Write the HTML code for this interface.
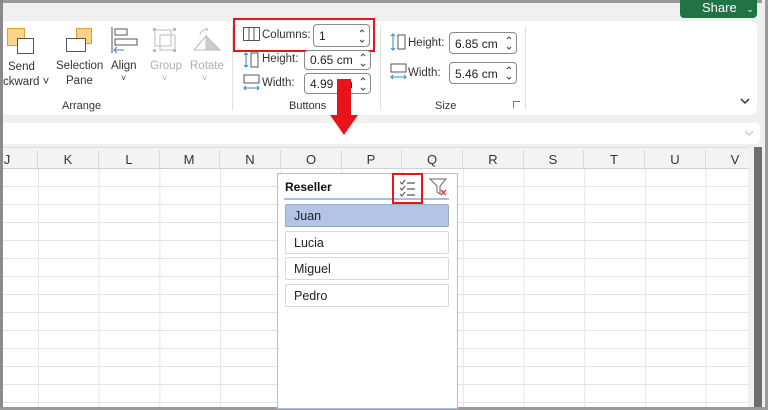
<!DOCTYPE html><html><head><style>
*{box-sizing:border-box;margin:0;padding:0}
body{width:768px;height:410px;overflow:hidden;background:#f0f0f0;font-family:"Liberation Sans",sans-serif;position:relative;color:#222}
.a{position:absolute}
.t{font-size:11.5px;color:#333;white-space:nowrap}
.g{color:#b0b0b0}
.inp{position:absolute;background:#fff;border:1px solid #8a8a8a;border-radius:4px;font-size:12px;padding:2px 0 0 5px;color:#222}
.inp svg{position:absolute;right:4px;top:50%;margin-top:-8px}
.col{position:absolute;top:150px;height:19px;width:61px;text-align:center;font-size:13px;color:#333;line-height:19px;border-right:1px solid #d8d8d8}
.item{position:absolute;left:285px;width:164px;height:23px;border:1px solid #d8d8d8;border-radius:2px;background:#fff;font-size:12.5px;padding:4px 0 0 8px;color:#222}
</style></head><body>
<div class="a" style="left:0;top:0;width:768px;height:3px;background:#9a9a9a"></div>
<div class="a" style="left:0;top:0;width:3px;height:410px;background:#8a8a8a"></div>
<div class="a" style="left:680px;top:0;width:77px;height:18px;background:#217346;border-radius:0 0 4px 4px;color:#fff;font-size:13px;padding:0 0 0 22px;line-height:15px">Share <span style="font-size:9px;margin-left:6px">⌄</span></div>
<div class="a" style="left:3px;top:21px;width:754px;height:94px;background:#fff;border-radius:0 6px 6px 0"></div>
<div class="a" style="left:7px;top:28px;width:18px;height:18px;background:#fbd38a;border:1px solid #e0a030"></div>
<div class="a" style="left:17px;top:38px;width:17px;height:16px;background:#fff;border:1.5px solid #555"></div>
<div class="a t" style="left:8px;top:61px">Send</div>
<div class="a t" style="left:3px;top:76px">ckward ˅</div>
<div class="a" style="left:76px;top:28px;width:16px;height:16px;background:#fbd38a;border:1px solid #e0a030"></div>
<div class="a" style="left:66px;top:38px;width:20px;height:14px;background:#fff;border:1.5px solid #555"></div>
<div class="a t" style="left:56px;top:60px">Selection</div>
<div class="a t" style="left:66px;top:75px">Pane</div>
<svg class="a" style="left:110px;top:26px" width="30" height="30"><path d="M2 1v26" stroke="#555"/><rect x="5" y="3" width="12" height="6" fill="none" stroke="#555"/><rect x="5" y="13" width="22" height="6" fill="none" stroke="#555"/><path d="M4 24h10M7 21l-3 3 3 3" stroke="#2a8ad4" fill="none"/></svg>
<div class="a t" style="left:111px;top:60px">Align</div>
<div class="a t" style="left:121px;top:73px;font-size:9px">˅</div>
<svg class="a" style="left:152px;top:27px" width="26" height="28"><rect x="3" y="3" width="16" height="16" fill="none" stroke="#bbb"/><rect x="8" y="8" width="15" height="15" fill="none" stroke="#bbb"/><rect x="1" y="1" width="3" height="3" fill="#bbb"/><rect x="21" y="1" width="3" height="3" fill="#bbb"/><rect x="1" y="22" width="3" height="3" fill="#bbb"/><rect x="21" y="22" width="3" height="3" fill="#bbb"/></svg>
<div class="a t g" style="left:150px;top:60px">Group</div>
<div class="a t g" style="left:162px;top:73px;font-size:9px">˅</div>
<svg class="a" style="left:192px;top:27px" width="30" height="28"><path d="M2 23L14 9v14z" fill="none" stroke="#bbb"/><path d="M14 9l14 14H14" fill="#ccc" stroke="#bbb"/><path d="M8 8a6 6 0 0 1 8-5l-2-2" fill="none" stroke="#bbb"/></svg>
<div class="a t g" style="left:190px;top:60px">Rotate</div>
<div class="a t g" style="left:202px;top:73px;font-size:9px">˅</div>
<div class="a t" style="left:62px;top:100px;font-size:11px">Arrange</div>
<div class="a" style="left:232px;top:26px;width:1px;height:84px;background:#e0e0e0"></div>
<svg class="a" style="left:243px;top:27px" width="17" height="14"><rect x="0.5" y="0.5" width="16" height="13" fill="none" stroke="#555"/><path d="M6 0v14M11 0v14" stroke="#555"/></svg>
<div class="a t" style="left:262px;top:29px">Columns:</div>
<div class="inp" style="left:313px;top:24px;width:57px;height:23px;padding-top:4px">1<svg width="6" height="16"><path d="M1 4l2-2 2 2M1 12l2 2 2-2" stroke="#444" fill="none"/></svg></div>
<div class="a" style="left:233px;top:18px;width:142px;height:34px;border:2.5px solid #e8141a"></div>
<svg class="a" style="left:243px;top:52px" width="17" height="16"><path d="M3 1v14M1 3l2-2 2 2M1 13l2 2 2-2" stroke="#2a8ad4" fill="none"/><rect x="8" y="1" width="7" height="14" fill="none" stroke="#555"/></svg>
<div class="a t" style="left:262px;top:53px">Height:</div>
<div class="inp" style="left:304px;top:50px;width:67px;height:20px">0.65 cm<svg width="6" height="16"><path d="M1 4l2-2 2 2M1 12l2 2 2-2" stroke="#444" fill="none"/></svg></div>
<svg class="a" style="left:243px;top:74px" width="17" height="18"><rect x="1" y="1" width="15" height="8" fill="none" stroke="#555"/><path d="M1 14h15M3 12l-2 2 2 2M14 12l2 2-2 2" stroke="#2a8ad4" fill="none"/></svg>
<div class="a t" style="left:262px;top:77px">Width:</div>
<div class="inp" style="left:304px;top:73px;width:67px;height:21px;padding-top:3px">4.99 cm<svg width="6" height="16"><path d="M1 4l2-2 2 2M1 12l2 2 2-2" stroke="#444" fill="none"/></svg></div>
<div class="a t" style="left:289px;top:100px;font-size:11px">Buttons</div>
<div class="a" style="left:380px;top:26px;width:1px;height:84px;background:#e0e0e0"></div>
<svg class="a" style="left:390px;top:33px" width="17" height="18"><path d="M3 1v16M1 3l2-2 2 2M1 15l2 2 2-2" stroke="#2a8ad4" fill="none"/><rect x="8" y="2" width="7" height="14" fill="none" stroke="#555"/></svg>
<div class="a t" style="left:408px;top:37px">Height:</div>
<div class="inp" style="left:449px;top:32px;width:68px;height:22px;padding-top:4px">6.85 cm<svg width="6" height="16"><path d="M1 4l2-2 2 2M1 12l2 2 2-2" stroke="#444" fill="none"/></svg></div>
<svg class="a" style="left:390px;top:63px" width="17" height="18"><rect x="1" y="1" width="15" height="8" fill="none" stroke="#555"/><path d="M1 14h15M3 12l-2 2 2 2M14 12l2 2-2 2" stroke="#2a8ad4" fill="none"/></svg>
<div class="a t" style="left:408px;top:67px">Width:</div>
<div class="inp" style="left:449px;top:62px;width:68px;height:22px;padding-top:4px">5.46 cm<svg width="6" height="16"><path d="M1 4l2-2 2 2M1 12l2 2 2-2" stroke="#444" fill="none"/></svg></div>
<div class="a t" style="left:435px;top:100px;font-size:11px">Size</div>
<div class="a" style="left:513px;top:101px;width:7px;height:7px;border-left:1px solid #777;border-top:1px solid #777"></div>
<div class="a" style="left:525px;top:26px;width:1px;height:84px;background:#e0e0e0"></div>
<svg class="a" style="left:740px;top:98px" width="10" height="7"><path d="M1 1l4 4 4-4" stroke="#333" stroke-width="1.5" fill="none"/></svg>
<div class="a" style="left:3px;top:123px;width:757px;height:21px;background:#fff;border-radius:0 4px 4px 0"></div>
<svg class="a" style="left:744px;top:130px" width="10" height="6"><path d="M1 1l4 4 4-4" stroke="#bbb" fill="none"/></svg>
<div class="a" style="left:3px;top:147px;width:745px;height:263px;background:#fff;
background-image:linear-gradient(#e4e4e4 1px,transparent 1px),linear-gradient(90deg,#e4e4e4 1px,transparent 1px);
background-size:60.7px 18px;background-position:35px 21px"></div>
<div class="a" style="left:3px;top:147px;width:745px;height:22px;background:#f3f3f3;border-bottom:1px solid #d0d0d0;border-top:1px solid #ddd"></div>
<div class="col" style="left:-23px">J</div>
<div class="col" style="left:38px">K</div>
<div class="col" style="left:99px">L</div>
<div class="col" style="left:159px">M</div>
<div class="col" style="left:220px">N</div>
<div class="col" style="left:281px">O</div>
<div class="col" style="left:341px">P</div>
<div class="col" style="left:402px">Q</div>
<div class="col" style="left:463px">R</div>
<div class="col" style="left:523px">S</div>
<div class="col" style="left:584px">T</div>
<div class="col" style="left:645px">U</div>
<div class="col" style="left:705px">V</div>
<div class="a" style="left:748px;top:147px;width:6px;height:263px;background:#f0f0f0"></div>
<div class="a" style="left:754px;top:147px;width:8px;height:263px;background:#6e6e6e"></div>
<div class="a" style="left:762px;top:0;width:6px;height:410px;background:#f0f0f0;border-right:3px solid #9a9a9a"></div>
<div class="a" style="left:0;top:407px;width:768px;height:3px;background:#9a9a9a"></div>
<div class="a" style="left:277px;top:173px;width:181px;height:236px;background:#fff;border:1px solid #a9bde6"></div>
<div class="a" style="left:285px;top:180px;font-size:12px;font-weight:bold;color:#111">Reseller</div>
<div class="a" style="left:284px;top:198px;width:165px;height:2px;background:#a9bde6"></div>
<svg class="a" style="left:397px;top:178px" width="22" height="20"><path d="M3 4l2 2 3-4M3 10l2 2 3-4M3 16l2 2 3-4" stroke="#555" fill="none" stroke-width="1.1"/><path d="M10 5h8M10 11h8M10 17h8" stroke="#555" stroke-width="1.2"/></svg>
<div class="a" style="left:392px;top:173px;width:31px;height:31px;border:2.5px solid #e8141a"></div>
<svg class="a" style="left:429px;top:178px" width="22" height="20"><path d="M1 1h16l-6 7v8l-3-2V8z" fill="none" stroke="#666"/><path d="M12 12l5 5M17 12l-5 5" stroke="#e03a3a" stroke-width="1.4"/></svg>
<div class="item" style="top:204px;background:#b2c5e6;border-color:#9aa9c4">Juan</div>
<div class="item" style="top:231px">Lucia</div>
<div class="item" style="top:257px">Miguel</div>
<div class="item" style="top:284px">Pedro</div>
<svg class="a" style="left:329px;top:79px" width="30" height="57"><path d="M8 0h14v36h7L15 56 1 36h7z" fill="#e8141a"/></svg>
</body></html>
